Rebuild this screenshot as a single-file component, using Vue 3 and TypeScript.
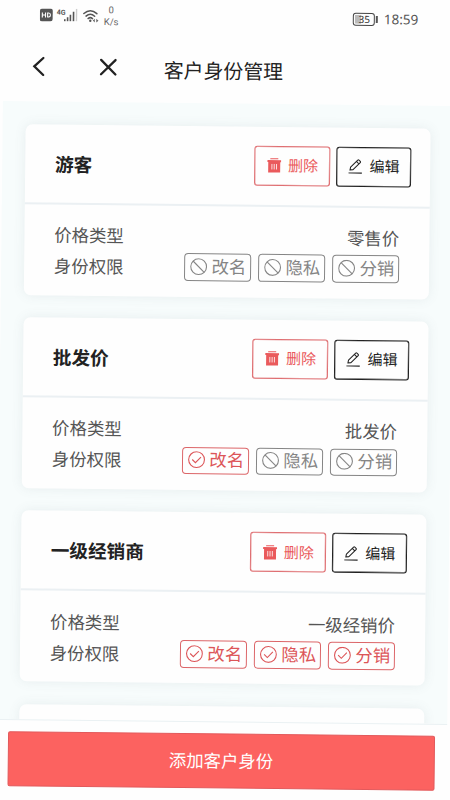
<script setup lang="ts">
interface Permission {
  label: string
  on: boolean
}
interface Identity {
  name: string
  price: string
  permissions: Permission[]
}

function makePermissions(rename: boolean, privacy: boolean, share: boolean): Permission[] {
  return [
    { label: '改名', on: rename },
    { label: '隐私', on: privacy },
    { label: '分销', on: share },
  ]
}

const identities: Identity[] = [
  { name: '游客', price: '零售价', permissions: makePermissions(false, false, false) },
  { name: '批发价', price: '批发价', permissions: makePermissions(true, false, false) },
  { name: '一级经销商', price: '一级经销价', permissions: makePermissions(true, true, true) },
]
</script>

<template>
  <div class="viewport">
    <div class="page">
      <header class="status">
        <svg class="hd" viewBox="0 0 13 13">
          <rect width="13" height="13" rx="2.5" fill="#555" />
          <path d="M2.5 4v5M5.7 4v5M2.5 6.5h3.2M7.8 4.5v4h1q1.8 0 1.8-2t-1.8-2z" fill="none" stroke="#fff" stroke-width="1.1" />
        </svg>
        <div class="signal">
          <span class="net">4G</span>
          <svg class="bars" viewBox="0 0 14 13">
            <path d="M1 10.5v2M3.8 8.5v4M6.6 6v6.5M9.7 3v9.5" stroke="#555" stroke-width="1.6" />
            <path d="M12.7 0v12.5" stroke="#ccc" stroke-width="1.4" />
          </svg>
        </div>
        <svg class="wifi" viewBox="0 0 17 14">
          <path d="M1 4.6Q7.5-1.2 14 4.6M3.2 7.2Q7.5 3.4 11.8 7.2M5.3 9.6Q7.5 7.7 9.7 9.6" fill="none" stroke="#555" stroke-width="1.5" stroke-linecap="round" />
          <circle cx="7.5" cy="11.7" r="1.2" fill="#555" />
          <path d="M12 9.8v3.6l-2-1.8zM13.5 9.8v3.6l2.2-1.8z" fill="#666" />
        </svg>
        <div class="speed"><span>0</span><span>K/s</span></div>
        <div class="right">
          <div class="battery"><span class="level">35</span></div>
          <span class="time">18:59</span>
        </div>
      </header>

      <nav class="nav">
        <svg class="back" viewBox="0 0 14 20"><path d="M11 1.5L2 10l9 8.5" /></svg>
        <svg class="close" viewBox="0 0 18 18"><path d="M1.8 1.8l14.4 14.4M16.2 1.8L1.8 16.2" /></svg>
        <h1>客户身份管理</h1>
      </nav>

      <main class="list">
        <section v-for="item in identities" :key="item.name" class="card">
          <div class="head">
            <h2>{{ item.name }}</h2>
            <button class="btn danger">
              <svg viewBox="0 0 14 15">
                <path d="M3 .8h8" stroke="currentColor" stroke-width="1.1" />
                <path d="M0 2.2h14v1.9h-1V14.5H1V4.1H0z" fill="currentColor" />
                <path d="M4.7 6v5.5M7 6v5.5M9.3 6v5.5" stroke="#fff" stroke-width=".8" />
              </svg>
              <span>删除</span>
            </button>
            <button class="btn">
              <svg viewBox="0 0 14 15">
                <path d="M.3 14.2h13.4M1.8 11.3l.6-3 7.1-7.1q.6-.6 1.2 0l1.3 1.3q.6.6 0 1.2L4.9 10.8zM8.2 2.6l2.5 2.5" fill="none" stroke="currentColor" stroke-width="1.05" stroke-linejoin="round" />
              </svg>
              <span>编辑</span>
            </button>
          </div>
          <div class="body">
            <div class="row">
              <span>价格类型</span>
              <span>{{ item.price }}</span>
            </div>
            <div class="row">
              <span>身份权限</span>
              <div class="tags">
                <span v-for="p in item.permissions" :key="p.label" class="tag" :class="{ on: p.on }">
                  <svg viewBox="0 0 17 17">
                    <circle cx="8.5" cy="8.5" r="7.9" />
                    <path v-if="p.on" d="M4.2 8.4l3.2 3.2 5.5-5.7" />
                    <path v-else d="M2.9 2.9l11.2 11.2" />
                  </svg>
                  <span>{{ p.label }}</span>
                </span>
              </div>
            </div>
          </div>
        </section>
        <section class="card"><div class="head"></div></section>
      </main>

      <footer class="footer">
        <button class="add">添加客户身份</button>
      </footer>
    </div>
  </div>
</template>

<style>
body {
  margin: 0;
  background: #fefefe;
}
</style>

<style scoped>
.viewport {
  width: 450px;
  height: 800px;
  overflow: hidden;
  background: #fefefe;
  font-family: "Noto Sans CJK SC", sans-serif;
  color: #222;
}
.page {
  width: 451px;
  height: 830px;
  margin-left: 4px;
  box-sizing: border-box;
  display: flex;
  flex-direction: column;
  transform: rotate(0.62deg);
  transform-origin: -4px 0;
}
h1,
h2 {
  margin: 0;
  font-weight: 400;
}
button {
  font-family: inherit;
  margin: 0;
  padding: 0;
}
.status {
  flex: none;
  height: 30px;
  display: flex;
  align-items: center;
  padding-left: 36px;
  box-sizing: border-box;
}
.hd {
  width: 13px;
  height: 13px;
  margin-top: -2px;
}
.signal {
  display: flex;
  margin-left: 4px;
  margin-top: -2px;
  align-items: flex-start;
}
.net {
  font: bold 7px/8px Roboto, sans-serif;
  color: #555;
  width: 7px;
}
.bars {
  width: 14px;
  height: 13px;
}
.wifi {
  width: 17px;
  height: 14px;
  margin-left: 5px;
  margin-top: -1px;
}
.speed {
  display: flex;
  flex-direction: column;
  align-items: center;
  margin-left: 4px;
  font: 9.5px/12px Roboto, sans-serif;
  color: #666;
}
.right {
  display: flex;
  align-items: center;
  margin-left: auto;
  margin-right: 36.5px;
}
.battery {
  width: 22px;
  height: 13px;
  box-sizing: border-box;
  border: 1px solid #444;
  border-radius: 3px;
  background: linear-gradient(90deg, #bbb 35%, transparent 35%);
  background-clip: content-box;
  padding: 1px;
  display: flex;
  align-items: center;
  justify-content: center;
  position: relative;
}
.battery::after {
  content: "";
  position: absolute;
  right: -4px;
  top: 2px;
  width: 2px;
  height: 7px;
  background: #555;
}
.level {
  font: 10px/10px "Noto Sans", sans-serif;
  color: #333;
}
.time {
  margin-left: 8.5px;
  font: 13.5px/16px "Noto Sans", sans-serif;
  color: #555;
}
.nav {
  flex: none;
  height: 71.4px;
  box-sizing: border-box;
  padding-left: 28.5px;
  display: flex;
  align-items: center;
}
.nav svg {
  fill: none;
  stroke: #222;
  stroke-width: 2.3;
  stroke-linecap: round;
}
.back {
  width: 14px;
  height: 20px;
}
.close {
  width: 18px;
  height: 18px;
  margin-left: 53.5px;
}
.nav h1 {
  margin-left: 46.5px;
  font-size: 19.9px;
  line-height: 30px;
  padding-top: 4px;
}
.list {
  flex: none;
  height: 617.4px;
  box-sizing: border-box;
  overflow: hidden;
  padding: 22.3px 23px 0 23px;
  background: #f7fcfc;
  display: flex;
  flex-direction: column;
  gap: 22.3px;
}
.card {
  flex: none;
  height: 171px;
  background: #fefefe;
  border-radius: 7px;
  box-shadow: 0 0 12px rgba(90, 105, 115, 0.1);
}
.head {
  height: 80px;
  box-sizing: border-box;
  border-bottom: 2px solid #ebf0f3;
  padding: 0 18.9px 0 29.8px;
  display: flex;
  align-items: center;
  gap: 6px;
}
.head h2 {
  flex: 1;
  font-size: 18.6px;
  font-weight: 700;
  line-height: 28px;
}
.btn {
  width: 75.5px;
  height: 40px;
  box-sizing: border-box;
  border: 1px solid #222;
  box-shadow: inset 0 0 0 0.3px #222;
  border-radius: 3px;
  background: transparent;
  color: #222;
  display: flex;
  align-items: center;
  justify-content: center;
  gap: 7px;
  padding-left: 1px;
  font-size: 15px;
  line-height: 22px;
}
.btn span {
  padding-bottom: 1px;
}
.btn svg {
  width: 14px;
  height: 15px;
}
.danger {
  color: #ea5a5c;
  border-color: #df6f72;
  box-shadow: inset 0 0 0 0.3px #df6f72;
}
.body {
  padding: 15px 30.3px 0 29.8px;
}
.row {
  display: flex;
  align-items: center;
  justify-content: space-between;
  height: 31px;
  font-size: 17.4px;
  line-height: 26px;
  color: #555;
}
.tags {
  display: flex;
  gap: 7.5px;
}
.tag {
  width: 66.5px;
  height: 27.5px;
  box-sizing: border-box;
  border: 1px solid #858585;
  border-radius: 4px;
  color: #858585;
  display: flex;
  align-items: center;
  padding-left: 4.7px;
  gap: 4.5px;
}
.tag svg {
  flex: none;
  width: 17px;
  height: 17px;
  margin-top: -1px;
  fill: none;
  stroke: currentColor;
  stroke-width: 1.1;
}
.tag > span {
  padding-bottom: 2px;
}
.tag.on {
  color: #dc5558;
  border-color: #dc6669;
}
.footer {
  flex: 1;
  background: #fefefe;
  border-top: 1px solid #eaf1f3;
  padding: 11.3px 12px 0 11.5px;
}
.add {
  display: block;
  width: 100%;
  height: 54.6px;
  border: 1px solid #e2595b;
  border-radius: 2px;
  background: #fc6260;
  color: #fff;
  font-size: 17.4px;
  line-height: 26px;
}
</style>
